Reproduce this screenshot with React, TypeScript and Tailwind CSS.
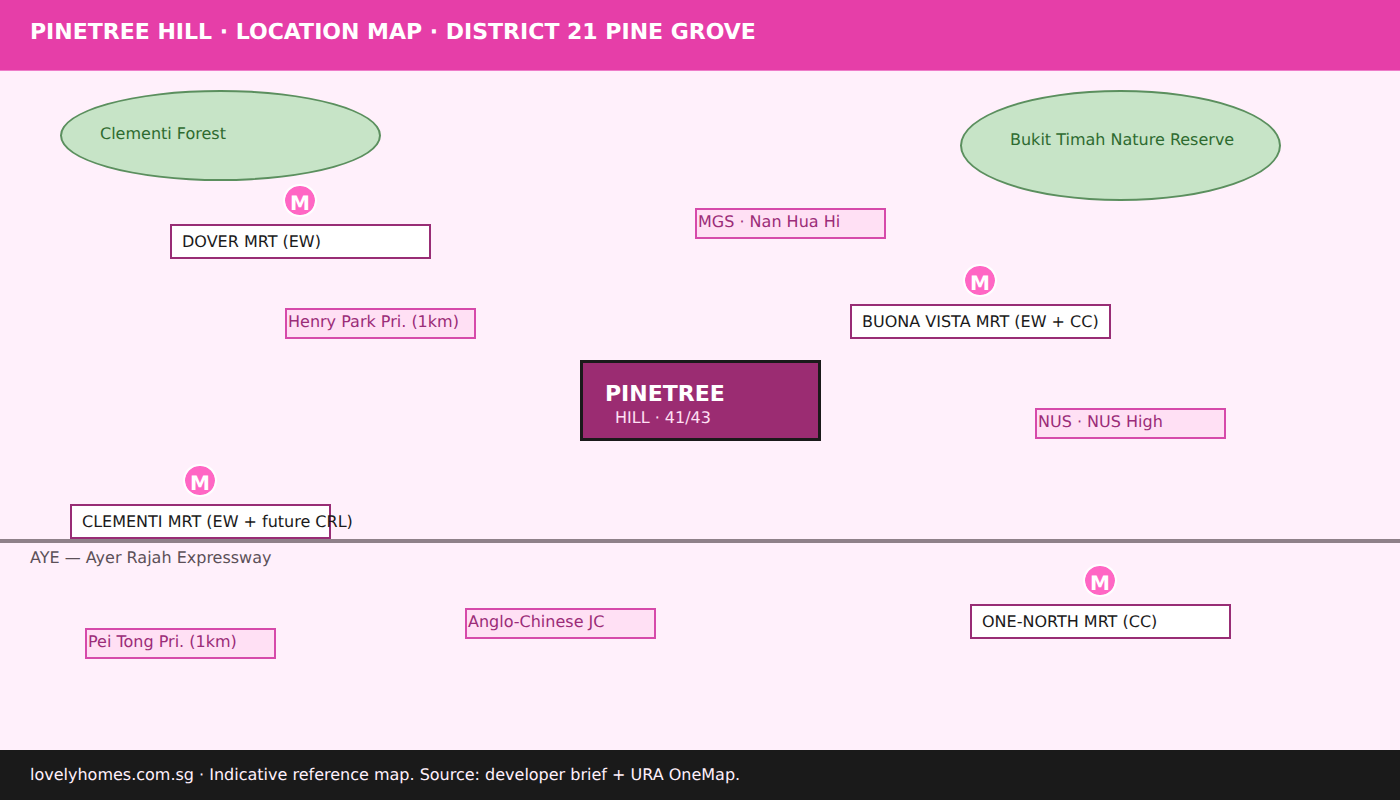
import React from 'react';

const font = { fontFamily: '"DejaVu Sans", sans-serif' };

const stations = [
  { name: 'DOVER MRT (EW)', box: 'left-[170px] top-[154px]', pin: 'left-[283px] top-[114px]' },
  { name: 'BUONA VISTA MRT (EW + CC)', box: 'left-[850px] top-[234px]', pin: 'left-[963px] top-[194px]' },
  { name: 'CLEMENTI MRT (EW + future CRL)', box: 'left-[70px] top-[434px]', pin: 'left-[183px] top-[394px]' },
  { name: 'ONE-NORTH MRT (CC)', box: 'left-[970px] top-[534px]', pin: 'left-[1083px] top-[494px]' },
];

const schools = [
  { name: 'MGS · Nan Hua Hi', pos: 'left-[695px] top-[138px]' },
  { name: 'Henry Park Pri. (1km)', pos: 'left-[285px] top-[238px]' },
  { name: 'NUS · NUS High', pos: 'left-[1035px] top-[338px]' },
  { name: 'Anglo-Chinese JC', pos: 'left-[465px] top-[538px]' },
  { name: 'Pei Tong Pri. (1km)', pos: 'left-[85px] top-[558px]' },
];

const App = () => {
  return (
    <div className="flex flex-col w-[1400px] h-[800px] overflow-hidden bg-[#fff0fb] [text-rendering:geometricPrecision]" style={font}>
      {/* Header */}
      <div className="relative h-[70px] shrink-0 bg-[#e63ea8] shadow-[0_1px_0_#ee7cc8] px-[30px] pt-[18px]">
        <h1 className="text-[22px] leading-[30px] font-bold text-white whitespace-nowrap">
          PINETREE HILL · LOCATION MAP · DISTRICT 21 PINE GROVE
        </h1>
      </div>

      {/* Map */}
      <div className="relative flex-1">
        <div className="absolute left-[60px] top-[20px] w-[321px] h-[91px] rounded-[50%] border-2 border-[#5b8f5e] bg-[#c7e4c7]" />
        <span className="absolute left-[100px] top-[54px] text-[16px] leading-5 text-[#2e6b30]">Clementi Forest</span>
        <div className="absolute left-[960px] top-[20px] w-[321px] h-[111px] rounded-[50%] border-2 border-[#5b8f5e] bg-[#c7e4c7]" />
        <span className="absolute left-[1010px] top-[60px] text-[16px] leading-5 text-[#2e6b30]">Bukit Timah Nature Reserve</span>

        {/* Expressway */}
        <div className="absolute left-0 right-0 top-[469px] h-1 bg-[#8f8189]" />
        <span className="absolute left-[30px] top-[478px] text-[16px] leading-5 text-[#5c5058]">AYE — Ayer Rajah Expressway</span>

        {stations.map((s) => (
          <React.Fragment key={s.name}>
            <div className={`absolute ${s.pin} flex items-center justify-center w-[34px] h-[33px] rounded-full border-2 border-white/90 bg-[#ff66c4] bg-clip-padding text-[20px] font-bold text-white pt-[4px]`}>
              M
            </div>
            <div className={`absolute ${s.box} w-[261px] h-[35px] border-2 border-[#982d75] bg-white pl-[10px] text-[16px] leading-[31px] text-[#1a1a1a] whitespace-nowrap`}>
              {s.name}
            </div>
          </React.Fragment>
        ))}

        {schools.map((s) => (
          <div
            key={s.name}
            className={`absolute ${s.pos} w-[191px] h-[31px] border-2 border-[#d64aaa] bg-[#ffe0f4] pl-px text-[16px] leading-[23px] text-[#9b2c78] whitespace-nowrap`}
          >
            {s.name}
          </div>
        ))}

        {/* Project marker */}
        <div className="absolute left-[580px] top-[290px] w-[241px] h-[81px] border-[3px] border-[#1a1a1a] bg-[#9b2c72]">
          <div className="pl-[22px] pt-[17px] text-[22px] leading-[30px] font-bold text-white">PINETREE</div>
          <div className="pl-[32px] -mt-px text-[16px] leading-[18px] text-[#ffe0f4]">HILL · 41/43</div>
        </div>
      </div>

      {/* Footer */}
      <div className="h-[50px] shrink-0 bg-[#1a1a1a] px-[30px] text-[16px] leading-[50px] text-[#fff0fb]">
        lovelyhomes.com.sg · Indicative reference map. Source: developer brief + URA OneMap.
      </div>
    </div>
  );
};

export default App;
